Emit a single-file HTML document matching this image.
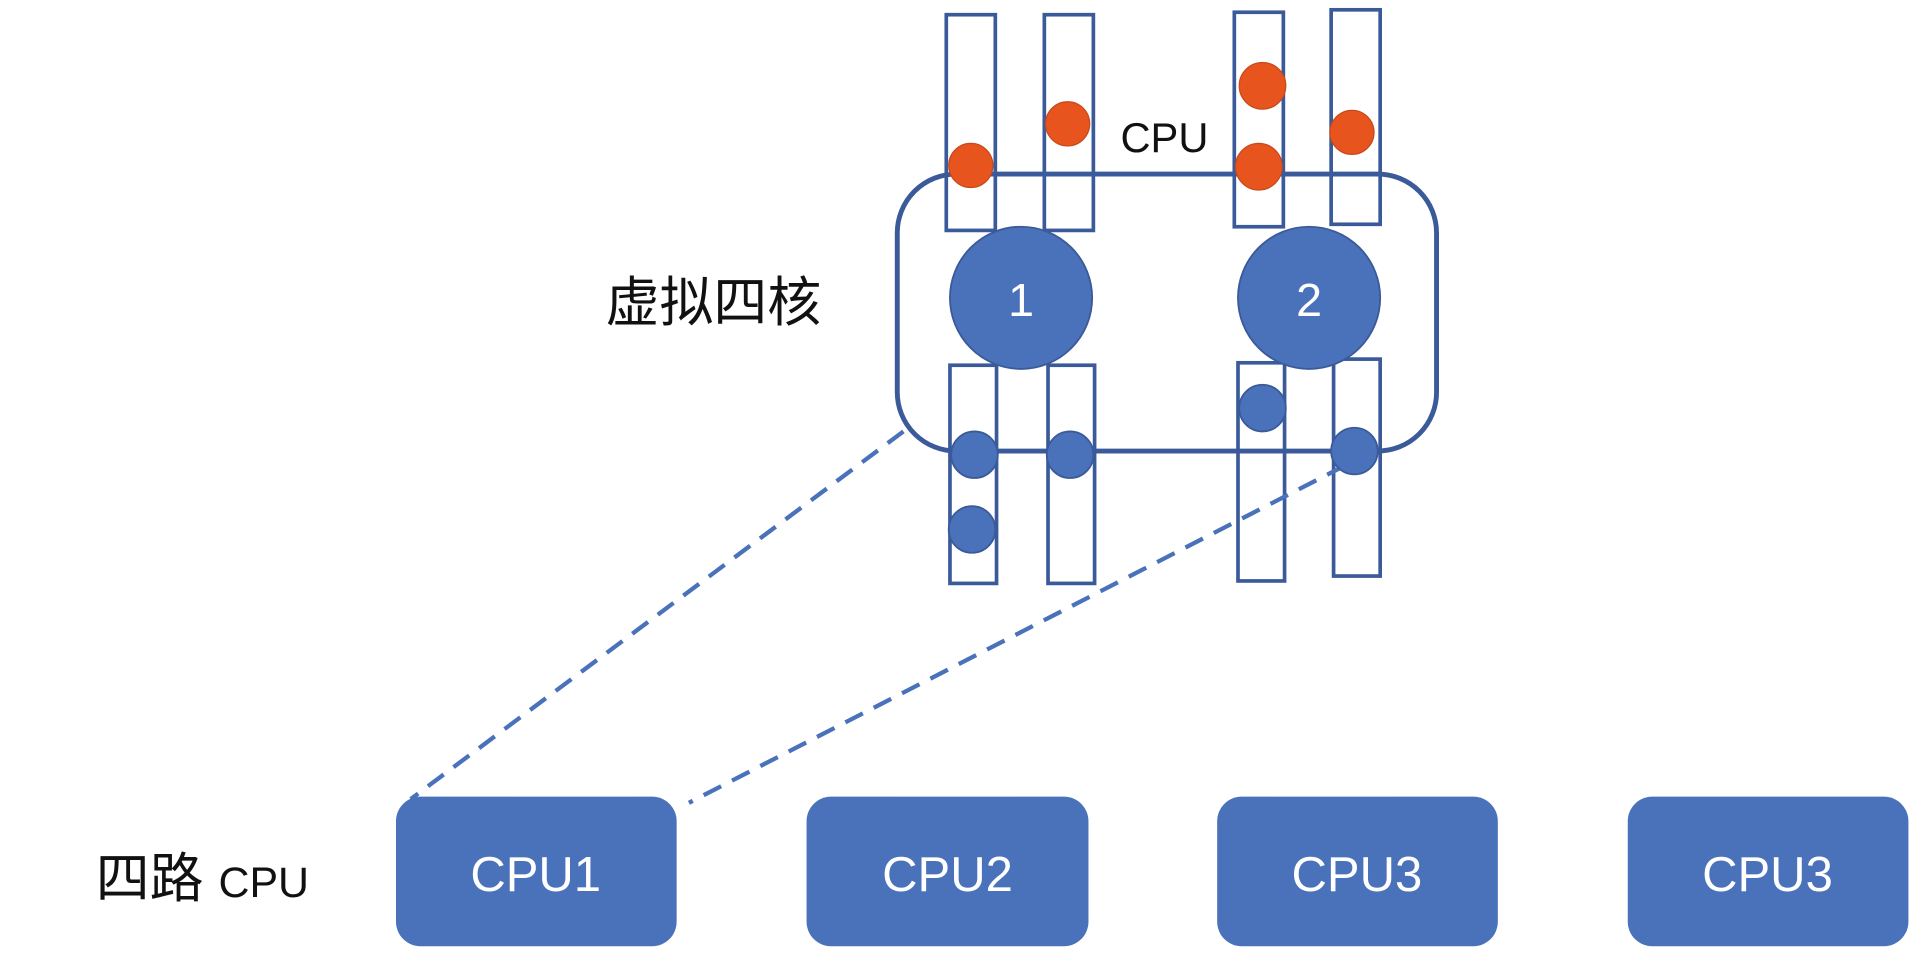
<!DOCTYPE html>
<html><head><meta charset="utf-8"><style>
html,body{margin:0;padding:0;background:#fff;width:1922px;height:956px;overflow:hidden}
svg{display:block}
text{font-family:"Liberation Sans","Noto Sans CJK SC",sans-serif}
</style></head><body>
<svg width="1922" height="956" viewBox="0 0 1568 780" xmlns="http://www.w3.org/2000/svg">
<g fill="none" stroke="#3b5a9a" stroke-width="3">
<rect x="772" y="12" width="40" height="176"/>
<rect x="852" y="12" width="40" height="176"/>
<rect x="1007" y="10" width="40" height="175"/>
<rect x="1086" y="8" width="40" height="175"/>
<rect x="775" y="298" width="38" height="178"/>
<rect x="855" y="298" width="38" height="178"/>
<rect x="1010" y="296" width="38" height="178"/>
<rect x="1088" y="293" width="38" height="177"/>
<rect x="732" y="142" width="440" height="226" rx="48" stroke-width="4"/>
</g>
<g stroke="#4a72bb" stroke-width="3.5" stroke-dasharray="16,10" fill="none">
<line x1="737" y1="352" x2="335" y2="652"/>
<line x1="1097" y1="380" x2="562" y2="655"/>
</g>
<g fill="#4a72bb" stroke="#3b5a9a" stroke-width="1.5">
<circle cx="833" cy="243" r="58"/>
<circle cx="1068" cy="243" r="58"/>
<circle cx="795" cy="371" r="19"/>
<circle cx="873" cy="371" r="19"/>
<circle cx="1030" cy="333" r="19"/>
<circle cx="1105" cy="368" r="19"/>
<circle cx="793" cy="432" r="19"/>
</g>
<g fill="#e8541e" stroke="#c64a1a" stroke-width="1">
<circle cx="792" cy="135" r="18"/>
<circle cx="871" cy="101" r="18"/>
<circle cx="1030" cy="70" r="19"/>
<circle cx="1027" cy="136" r="19"/>
<circle cx="1103" cy="108" r="18"/>
</g>
<text x="833" y="258" fill="#fff" font-size="38" text-anchor="middle">1</text>
<text x="1068" y="258" fill="#fff" font-size="38" text-anchor="middle">2</text>
<text x="950" y="124" fill="#111" font-size="34" text-anchor="middle">CPU</text>
<text x="494" y="262" fill="#111" font-size="44">虚拟四核</text>
<g fill="#4a72bb">
<rect x="323" y="650" width="229" height="122" rx="20"/>
<rect x="658" y="650" width="230" height="122" rx="20"/>
<rect x="993" y="650" width="229" height="122" rx="20"/>
<rect x="1328" y="650" width="229" height="122" rx="20"/>
</g>
<g fill="#fff" font-size="40" text-anchor="middle">
<text x="437" y="727">CPU1</text>
<text x="773" y="727">CPU2</text>
<text x="1107" y="727">CPU3</text>
<text x="1442" y="727">CPU3</text>
</g>
<text x="78" y="732" fill="#111" font-size="44">四路 <tspan font-size="35">CPU</tspan></text>
</svg>
</body></html>
